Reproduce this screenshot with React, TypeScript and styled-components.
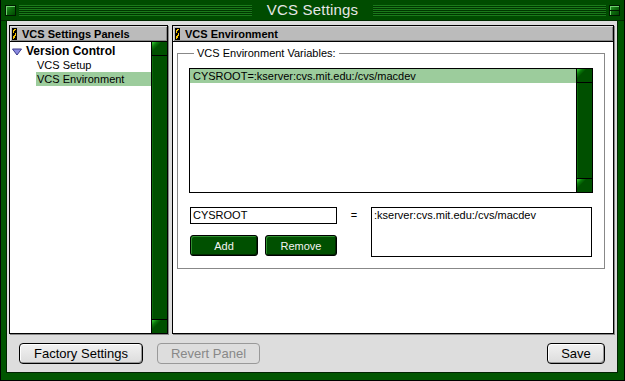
import React from "react";
import styled, { createGlobalStyle } from "styled-components";

const GlobalStyle = createGlobalStyle`
  html, body {
    margin: 0;
    padding: 0;
    background: #000;
  }
  body {
    font-family: "Liberation Sans", Arial, sans-serif;
  }
`;

const Window = styled.div`
  width: 625px;
  height: 381px;
  box-sizing: border-box;
  display: flex;
  flex-direction: column;
  background: #005500;
  border: 1px solid #000;
  border-top: none;
`;

const TitleBar = styled.div`
  height: 21px;
  display: flex;
  align-items: center;
  padding: 0 4px 0 4px;
  gap: 3px;
  box-sizing: border-box;
  background: #004c00;
  border-bottom: 1px solid #002a00;
`;

const Box = styled.div`
  width: 11px;
  height: 11px;
  flex: none;
  box-sizing: border-box;
  border: 1px solid #001a00;
  background: linear-gradient(135deg, #2f9f2f 0%, #0f6f0f 45%, #004800 100%);
  box-shadow: inset 1px 1px 0 #6fd06f;
  position: relative;
`;

const ZoomBox = styled(Box)`
  &::after {
    content: "";
    position: absolute;
    left: 0;
    right: 0;
    top: 4px;
    height: 1px;
    background: #001a00;
  }
`;

const Stripes = styled.div`
  flex: 1;
  height: 11px;
  background: repeating-linear-gradient(
    to bottom,
    #1b7a1b 0px,
    #1b7a1b 1px,
    #003600 1px,
    #003600 2px
  );
`;

const Title = styled.div`
  padding: 0 12px;
  color: #e6e6e6;
  font-size: 15px;
  line-height: 20px;
  letter-spacing: 0.2px;
`;

const Frame = styled.div`
  flex: 1;
  display: flex;
  padding: 0 6px 7px 5px;
`;

const Content = styled.div`
  flex: 1;
  display: flex;
  flex-direction: column;
  background: #dddddd;
  border: 1px solid #002200;
  border-top: none;
  padding: 4px 3px 0 2px;
`;

const Panels = styled.div`
  display: flex;
  gap: 4px;
  height: 309px;
`;

const Panel = styled.div<{ $width?: number }>`
  ${({ $width }) => ($width ? `width: ${$width}px; flex: none;` : "flex: 1;")}
  box-sizing: border-box;
  display: flex;
  flex-direction: column;
  border: 1px solid #000;
  background: #fff;
  box-shadow: 1px 1px 0 #888;
`;

const PanelHeader = styled.div`
  height: 15px;
  display: flex;
  align-items: center;
  gap: 5px;
  padding-left: 2px;
  background: #bbbbbb;
  border-bottom: 1px solid #000;
  box-shadow: inset 1px 1px 0 #e0e0e0, inset -1px -1px 0 #888;
  font-weight: bold;
  font-size: 11px;
  color: #000;
`;

const Grip = styled.div`
  width: 5px;
  height: 12px;
  border: 1px solid #000;
  box-sizing: border-box;
  background: repeating-linear-gradient(
    -50deg,
    #000 0px,
    #000 2px,
    #f4c400 2px,
    #f4c400 4px
  );
`;

const PanelBody = styled.div`
  flex: 1;
  display: flex;
  min-height: 0;
`;

const Tree = styled.div`
  flex: 1;
  padding-top: 3px;
  font-size: 11px;
`;

const TreeRow = styled.div<{ $level: number; $selected?: boolean; $bold?: boolean }>`
  height: ${({ $level }) => ($level === 0 ? 13 : 14)}px;
  line-height: ${({ $level }) => ($level === 0 ? 13 : 14)}px;
  display: flex;
  align-items: center;
  gap: 4px;
  margin-left: ${({ $level }) => ($level === 0 ? 2 : 26)}px;
  padding-left: ${({ $level }) => ($level === 0 ? 0 : 1)}px;
  font-weight: ${({ $bold }) => ($bold ? "bold" : "normal")};
  font-size: ${({ $bold }) => ($bold ? 12 : 11)}px;
  background: ${({ $selected }) => ($selected ? "#9ccc9c" : "transparent")};
`;

const Scrollbar = styled.div`
  width: 15px;
  flex: none;
  display: flex;
  flex-direction: column;
  border-left: 1px solid #000;
  background: #005000;
`;

const ScrollCap = styled.div`
  height: 13px;
  flex: none;
  border-bottom: 1px solid #000;
  background: linear-gradient(135deg, #3cd03c 0px, #0a7a0a 4px, #005000 7px);
  &:last-child {
    border-bottom: none;
    border-top: 1px solid #000;
  }
`;

const ScrollTrack = styled.div`
  flex: 1;
  background: #005000;
  box-shadow: inset 1px 0 0 #0a6a0a;
`;

const RightBody = styled.div`
  flex: 1;
  padding: 5px 8px 0 4px;
`;

const GroupBox = styled.fieldset`
  margin: 0;
  padding: 8px 11px 9px 11px;
  border: 1px solid #888;
  height: 222px;
  box-sizing: border-box;
`;

const Legend = styled.legend`
  font-size: 11px;
  padding: 0 3px;
  margin-left: 5px;
  line-height: 13px;
`;

const ListBox = styled.div`
  height: 125px;
  width: 404px;
  box-sizing: border-box;
  border: 1px solid #000;
  display: flex;
  font-size: 11px;
`;

const ListRows = styled.div`
  flex: 1;
`;

const ListRow = styled.div<{ $selected?: boolean }>`
  height: 14px;
  line-height: 14px;
  padding-left: 3px;
  background: ${({ $selected }) => ($selected ? "#9ccc9c" : "transparent")};
`;

const EditArea = styled.div`
  margin-top: 14px;
  display: flex;
  width: 404px;
`;

const LeftEdit = styled.div`
  display: flex;
  flex-direction: column;
  gap: 11px;
  padding-left: 1px;
`;

const TextField = styled.div<{ $width: number; $height: number }>`
  width: ${({ $width }) => $width}px;
  height: ${({ $height }) => $height}px;
  box-sizing: border-box;
  border: 1px solid #000;
  font-size: 11px;
  line-height: 14px;
  padding-left: 2px;
  background: #fff;
`;

const Equals = styled.div`
  width: 34px;
  text-align: center;
  font-size: 11px;
  line-height: 16px;
`;

const ButtonRow = styled.div`
  display: flex;
  gap: 7px;
`;

const GreenButton = styled.button<{ $width: number }>`
  width: ${({ $width }) => $width}px;
  height: 21px;
  padding: 0;
  border: 1px solid #000;
  border-radius: 3px;
  background: #005000;
  color: #f4f4f4;
  font-family: "Liberation Sans", Arial, sans-serif;
  font-weight: normal;
  font-size: 11px;
  box-shadow: inset 1px 1px 0 #2f8f2f, inset -1px -1px 0 #002800;
`;

const Footer = styled.div`
  display: flex;
  align-items: center;
  padding: 9px 9px 0 10px;
  gap: 14px;
`;

const MacButton = styled.button<{ $width: number; $disabled?: boolean; $push?: boolean }>`
  width: ${({ $width }) => $width}px;
  height: 21px;
  padding: 0;
  margin-left: ${({ $push }) => ($push ? "auto" : "0")};
  border: 1px solid ${({ $disabled }) => ($disabled ? "#999" : "#000")};
  border-radius: 4px;
  background: ${({ $disabled }) => ($disabled ? "#dddddd" : "linear-gradient(#f2f2f2, #dcdcdc)")};
  color: ${({ $disabled }) => ($disabled ? "#888" : "#000")};
  font-family: "Liberation Sans", Arial, sans-serif;
  font-size: 13px;
  box-shadow: ${({ $disabled }) =>
    $disabled ? "none" : "inset 1px 1px 0 #fff, inset -1px -1px 0 #999"};
`;

const Triangle = () => (
  <svg width="10" height="8" viewBox="0 0 10 8">
    <polygon points="0.5,1 9.5,1 5,7" fill="#8a8ae0" stroke="#3a3a8a" strokeWidth="1" />
  </svg>
);

export default function App() {
  return (
    <>
      <GlobalStyle />
      <Window>
        <TitleBar>
          <Box />
          <Stripes />
          <Title>VCS Settings</Title>
          <Stripes />
          <ZoomBox />
        </TitleBar>
        <Frame>
          <Content>
            <Panels>
              <Panel $width={159}>
                <PanelHeader>
                  <Grip />
                  VCS Settings Panels
                </PanelHeader>
                <PanelBody>
                  <Tree>
                    <TreeRow $level={0} $bold>
                      <Triangle />
                      Version Control
                    </TreeRow>
                    <TreeRow $level={1}>VCS Setup</TreeRow>
                    <TreeRow $level={1} $selected>
                      VCS Environment
                    </TreeRow>
                  </Tree>
                  <Scrollbar>
                    <ScrollCap />
                    <ScrollTrack />
                    <ScrollCap />
                  </Scrollbar>
                </PanelBody>
              </Panel>
              <Panel>
                <PanelHeader>
                  <Grip />
                  VCS Environment
                </PanelHeader>
                <RightBody>
                  <GroupBox>
                    <Legend>VCS Environment Variables:</Legend>
                    <ListBox>
                      <ListRows>
                        <ListRow $selected>CYSROOT=:kserver:cvs.mit.edu:/cvs/macdev</ListRow>
                      </ListRows>
                      <Scrollbar>
                        <ScrollCap />
                        <ScrollTrack />
                        <ScrollCap />
                      </Scrollbar>
                    </ListBox>
                    <EditArea>
                      <LeftEdit>
                        <TextField $width={147} $height={17}>
                          CYSROOT
                        </TextField>
                        <ButtonRow>
                          <GreenButton $width={68}>Add</GreenButton>
                          <GreenButton $width={72}>Remove</GreenButton>
                        </ButtonRow>
                      </LeftEdit>
                      <Equals>=</Equals>
                      <TextField $width={221} $height={50}>
                        :kserver:cvs.mit.edu:/cvs/macdev
                      </TextField>
                    </EditArea>
                  </GroupBox>
                </RightBody>
              </Panel>
            </Panels>
            <Footer>
              <MacButton $width={124}>Factory Settings</MacButton>
              <MacButton $width={103} $disabled>
                Revert Panel
              </MacButton>
              <MacButton $width={58} $push>
                Save
              </MacButton>
            </Footer>
          </Content>
        </Frame>
      </Window>
    </>
  );
}
